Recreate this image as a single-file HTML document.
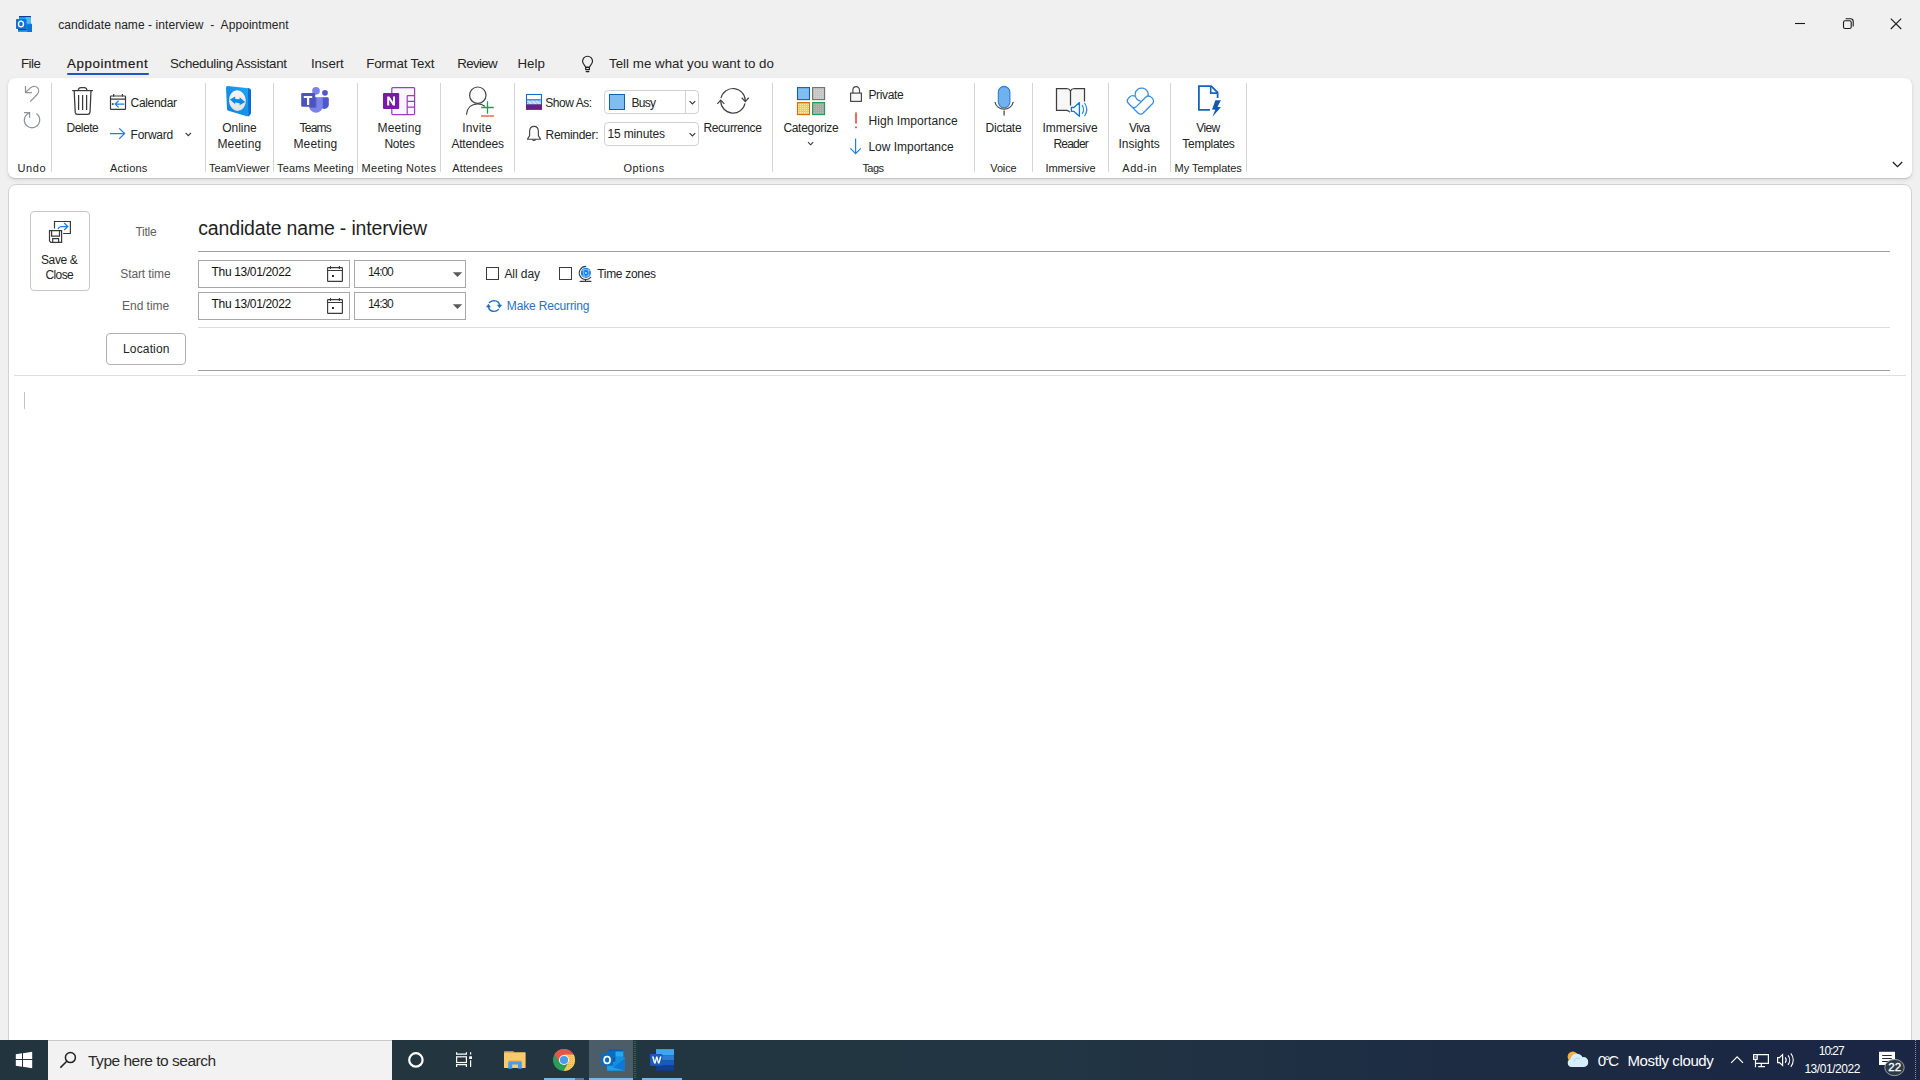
<!DOCTYPE html>
<html lang="en">
<head>
<meta charset="utf-8">
<title>candidate name - interview - Appointment</title>
<style>
html,body{margin:0;padding:0;width:1920px;height:1080px;overflow:hidden;background:#f0f0f0;}
body{font-family:"Liberation Sans",sans-serif;color:#242424;}
#root{position:relative;width:1920px;height:1080px;overflow:hidden;background:#f0f0f0;}
.t{position:absolute;white-space:nowrap;line-height:normal;}
.ic{position:absolute;left:0;top:0;pointer-events:none;}
.abs{position:absolute;box-sizing:border-box;}
.sep{position:absolute;top:83px;height:89px;width:1px;background:#d4d4d4;}
.hl{position:absolute;height:1px;}
</style>
</head>
<body>
<div id="root">
<!-- tab underline -->
<div class="abs" style="left:67px;top:73px;width:82px;height:2px;background:#185abd;border-radius:1px;"></div>
<!-- ribbon -->
<div class="abs" id="ribbon" style="left:8px;top:78px;width:1904px;height:100px;background:#fff;border-radius:7px;box-shadow:0 1px 1px rgba(0,0,0,.12),0 2px 5px rgba(0,0,0,.09),0 0 1px rgba(0,0,0,.10);"></div>
<div class="sep" style="left:51px"></div>
<div class="sep" style="left:205px"></div>
<div class="sep" style="left:273px"></div>
<div class="sep" style="left:357px"></div>
<div class="sep" style="left:440px"></div>
<div class="sep" style="left:514px"></div>
<div class="sep" style="left:772px"></div>
<div class="sep" style="left:974px"></div>
<div class="sep" style="left:1032px"></div>
<div class="sep" style="left:1108px"></div>
<div class="sep" style="left:1170px"></div>
<div class="sep" style="left:1246px"></div>
<!-- ribbon combos -->
<div class="abs" style="left:604px;top:90px;width:95px;height:24px;border:1px solid #d1d1d1;border-radius:4px;background:#fff;"></div>
<div class="abs" style="left:685px;top:91px;width:1px;height:22px;background:#d1d1d1;"></div>
<div class="abs" style="left:609px;top:94px;width:16px;height:16px;border:1px solid #0b63b8;background:#80bdf0;"></div>
<div class="abs" style="left:604px;top:122px;width:95px;height:24px;border:1px solid #d1d1d1;border-radius:4px;background:#fff;"></div>
<!-- content panel -->
<div class="abs" id="content" style="left:8px;top:184px;width:1904px;height:870px;background:#fff;border:1px solid #d2d2d2;border-radius:8px 8px 0 0;"></div>
<!-- save & close -->
<div class="abs" style="left:30px;top:211px;width:60px;height:80px;border:1px solid #c6c6c6;border-radius:4px;background:#fff;"></div>
<!-- title underline -->
<div class="hl" style="left:198px;top:251px;width:1692px;background:#a19f9d;"></div>
<!-- date/time boxes -->
<div class="abs" style="left:198px;top:260px;width:152px;height:28px;border:1px solid #aaa8a6;background:#fff;"></div>
<div class="abs" style="left:354px;top:260px;width:112px;height:28px;border:1px solid #aaa8a6;background:#fff;"></div>
<div class="abs" style="left:198px;top:292px;width:152px;height:28px;border:1px solid #aaa8a6;background:#fff;"></div>
<div class="abs" style="left:354px;top:292px;width:112px;height:28px;border:1px solid #aaa8a6;background:#fff;"></div>
<!-- checkboxes -->
<div class="abs" style="left:486px;top:267px;width:13px;height:13px;border:1px solid #3b3b3b;background:#fff;"></div>
<div class="abs" style="left:559px;top:267px;width:13px;height:13px;border:1px solid #3b3b3b;background:#fff;"></div>
<!-- lines -->
<div class="hl" style="left:198px;top:327px;width:1692px;background:#dcdcdc;"></div>
<div class="abs" style="left:106px;top:333px;width:80px;height:32px;border:1px solid #b3b0ad;border-radius:4px;background:#fff;"></div>
<div class="hl" style="left:198px;top:370px;width:1692px;background:#a19f9d;"></div>
<div class="hl" style="left:14px;top:375px;width:1892px;background:#dedede;"></div>
<!-- caret -->
<div class="abs" style="left:24px;top:392px;width:1px;height:17px;background:#c4c4c4;"></div>
<!-- taskbar -->
<div class="abs" id="taskbar" style="left:0;top:1040px;width:1920px;height:40px;background:linear-gradient(90deg,#22353f 0%,#223641 40%,#213543 55%,#1f3043 66%,#1d2c43 75%,#1c2a42 82%,#1b2844 90%,#1a2644 100%);"></div>
<div class="abs" style="left:48px;top:1040px;width:344px;height:40px;background:#f2f2f2;border-top:1px solid #c9c9c9;"></div>
<div class="abs" style="left:589px;top:1040px;width:44px;height:40px;background:#4b5d68;"></div>
<div class="abs" style="left:544px;top:1078px;width:31px;height:2px;background:#76b9ed;"></div>
<div class="abs" style="left:575px;top:1078px;width:9px;height:2px;background:#4c7ea6;"></div>
<div class="abs" style="left:589px;top:1078px;width:44px;height:2px;background:#76b9ed;"></div>
<div class="abs" style="left:642px;top:1078px;width:40px;height:2px;background:#76b9ed;"></div>


<svg class="ic" width="1920" height="1080" viewBox="0 0 1920 1080">
<!-- ===== title bar ===== -->
<g id="outlook-title">
  <path d="M19 16 H31 V23.4 L32 24 V32 H18 V29 H19 Z" fill="#14a4ee"/>
  <rect x="19" y="16" width="12" height="1.1" fill="#0a3f94"/>
  <rect x="25.5" y="17.1" width="5.5" height="6.4" fill="#4cbcf5"/>
  <path d="M26.6 24.6 L32 24 V32 H27.4 Z" fill="#0f72d6"/>
  <path d="M18 29 H26.6 V30.2 H18 Z" fill="#0a3f94"/>
  <rect x="16" y="18.9" width="10.6" height="10.2" rx=".8" fill="#0f72d6"/>
  <ellipse cx="21" cy="24" rx="2.5" ry="2.9" fill="none" stroke="#fff" stroke-width="1.35"/>
</g>
<g id="winctl" stroke="#1a1a1a" stroke-width="1.1" fill="none">
  <path d="M1795 23.5 H1805"/>
  <rect x="1843.5" y="20.8" width="7.7" height="7.7" rx="1.6"/>
  <path d="M1845.6 18.8 H1850.6 Q1853.2 18.8 1853.2 21.4 V26.4"/>
  <path d="M1890.8 18.6 L1901.2 29 M1901.2 18.6 L1890.8 29"/>
  <path d="M1892.8 162 L1897.5 166.7 L1902.2 162" stroke-width="1.2"/>
</g>
<!-- lightbulb -->
<g id="bulb" stroke="#1f1f1f" stroke-width="1.15" fill="none" stroke-linejoin="round">
  <path d="M585.7 67.3 C585.3 65.3 582.6 64.2 582.6 61.2 A4.95 4.95 0 0 1 592.5 61.2 C592.5 64.2 589.8 65.3 589.4 67.3 Z"/>
  <rect x="585.7" y="67.3" width="3.7" height="2.3"/>
  <path d="M586.2 71.6 H588.9" stroke-linecap="round"/>
</g>
<!-- ===== Undo group ===== -->
<g stroke="#8e9398" stroke-width="1.25" fill="none" stroke-linejoin="miter">
  <path d="M25.5 86 V92.5 H31.9"/>
  <path d="M25.7 92.3 L30.4 87.9 C32.6 85.9 35.6 85.7 37.4 87.6 C39.3 89.6 39 92.6 36.8 94.8 L30.2 101.6"/>
  <path d="M24 112.6 H29.6 V117.8"/>
  <path d="M29.4 112.8 C26.4 114.4 24.3 117 24.3 120.4 A7.7 7.7 0 1 0 36.3 113.6"/>
</g>
<!-- ===== Actions ===== -->
<g id="trash" stroke="#3a3a3a" stroke-width="1.25" fill="none" stroke-linejoin="round">
  <path d="M72.2 90.6 H93"/>
  <path d="M78.3 90.4 C78.3 88.4 79.4 87.5 81 87.5 H84.2 C85.8 87.5 86.9 88.4 86.9 90.4"/>
  <path d="M74.2 90.8 L75.2 112.4 Q75.4 114.4 77.4 114.4 H87.8 Q89.8 114.4 90 112.4 L91 90.8"/>
  <path d="M78.6 95 V110 M82.6 95 V110 M86.6 95 V110"/>
</g>
<g id="cal-arrow">
  <rect x="110.5" y="96" width="15" height="13.4" rx=".6" fill="#fff" stroke="#3a3a3a" stroke-width="1.2"/>
  <path d="M110.5 99.2 H125.5 M113.7 94 V96.6 M122.4 94 V96.6" stroke="#3a3a3a" stroke-width="1.2" fill="none"/>
  <rect x="111.9" y="103.2" width="1.7" height="1.7" fill="#3a3a3a"/>
  <path d="M124.2 104.1 H115.4 M118.6 100.8 L115.2 104.1 L118.6 107.4" stroke="#1e7fe0" stroke-width="1.25" fill="none"/>
</g>
<g stroke="#1e7fe0" stroke-width="1.25" fill="none">
  <path d="M110 133.6 H124.4 M119.2 128.4 L124.6 133.6 L119.2 138.8"/>
</g>
<path d="M185.6 132.9 L188.3 135.6 L191 132.9" stroke="#333" stroke-width="1.1" fill="none"/>
<!-- ===== TeamViewer ===== -->
<g id="tv">
  <path d="M247.4 87.8 L249.6 88.6 Q251 89.2 251 90.8 V112.6 Q251 113.6 250.4 114.4 L248.6 116.4 L246 115 Z" fill="#0a6bd3"/>
  <path d="M226 87.7 Q226 86 227.7 86.1 L246.4 87.9 Q247.8 88.1 247.8 89.6 L248.5 114.9 Q248.5 116.7 246.8 116.2 L228.4 110.8 Q227 110.4 227 109 Z" fill="url(#tvf)"/>
  <ellipse cx="237.4" cy="100.6" rx="8.4" ry="10.3" fill="url(#tvc)" transform="rotate(-4 237.4 100.6)"/>
  <path d="M229.9 99.5 L235.2 96.6 V98.9 L239.6 99.3 V97.2 L245.2 101.9 L239.6 105.2 V103.2 L235.2 102.6 V104.2 Z" fill="#0d8ae8"/>
</g>
<!-- ===== Teams ===== -->
<g id="teams">
  <circle cx="325" cy="92.8" r="2.85" fill="#4f58ca"/>
  <path d="M321 97.2 H327.4 Q328.8 97.2 328.8 98.6 V104 A4.6 4.6 0 0 1 321 107.6 Z" fill="#4f58ca"/>
  <circle cx="316" cy="90.8" r="3.85" fill="#7b83eb"/>
  <path d="M309.2 97.2 H321.6 Q322.8 97.2 322.8 98.4 V106 A6.8 6.8 0 0 1 309.2 106 Z" fill="#7b83eb"/>
  <path d="M309.2 97.2 H316.4 V107.8 H309.5 Q309.2 107 309.2 106 Z" fill="#2f3a8f" opacity=".5"/>
  <rect x="301.2" y="93" width="14" height="13.8" rx="1.3" fill="#4b53bc"/>
  <path d="M303.8 96 H312.2 V97.9 H309.2 V105 H307 V97.9 H303.8 Z" fill="#fff"/>
</g>
<!-- ===== OneNote ===== -->
<g id="onenote">
  <rect x="391.8" y="87.6" width="22.8" height="27" rx="1" fill="#faf7fc" stroke="#9a3cc4" stroke-width="1.25"/>
  <path d="M407.2 95.6 V114.4 M407.2 95.6 H414.6 M407.2 101.4 H414.6 M407.2 107.2 H414.6" stroke="#9a3cc4" stroke-width="1.2" fill="none"/>
  <rect x="383" y="93" width="16.2" height="16" rx="1" fill="#7719aa"/>
  <path d="M387.2 105.4 V96.6 H389.4 L393 102 V96.6 H395 V105.4 H392.9 L389.2 99.8 V105.4 Z" fill="#fff"/>
</g>
<!-- ===== Invite Attendees ===== -->
<g id="invite" fill="none">
  <circle cx="477.8" cy="95.2" r="8.2" stroke="#444" stroke-width="1.2" fill="#fcfcfc"/>
  <path d="M466.4 114.8 C467 108.4 471 104 477.6 104 C480.6 104 483 104.8 484.8 106.2" stroke="#444" stroke-width="1.2"/>
  <path d="M487.5 101.2 V113.8 M481.2 107.5 H493.8" stroke="#1e9d52" stroke-width="1.3"/>
  <path d="M481 116 H494" stroke="#e8412e" stroke-width="1.2"/>
</g>
<!-- ===== Options ===== -->
<defs>
  <pattern id="hatch" width="3" height="3" patternUnits="userSpaceOnUse" patternTransform="rotate(-45)"><rect width="3" height="3" fill="#d6ecfb"/><rect width="1.4" height="3" fill="#8cc4f2"/></pattern>
  <pattern id="dotg" width="2" height="2" patternUnits="userSpaceOnUse"><rect width="2" height="2" fill="#c4c6c4"/><rect width="1" height="1" fill="#d2d4d2"/></pattern>
  <pattern id="doto" width="2" height="2" patternUnits="userSpaceOnUse"><rect width="2" height="2" fill="#fcc55e"/><rect width="1" height="1" fill="#fff3b8"/></pattern>
  <pattern id="dotgg" width="2" height="2" patternUnits="userSpaceOnUse"><rect width="2" height="2" fill="#a4a9a3"/><rect width="1" height="1" fill="#b9bdb8"/></pattern>
  <linearGradient id="tvc" x1="0" y1="0" x2="0" y2="1"><stop offset="0" stop-color="#f6f6f6"/><stop offset="1" stop-color="#e2e2e2"/></linearGradient><linearGradient id="tvf" x1="0" y1="1" x2="1" y2="0"><stop offset="0" stop-color="#0a80e2"/><stop offset="1" stop-color="#1ca6f3"/></linearGradient>
</defs>
<g id="showas">
  <rect x="526.5" y="94.5" width="15" height="10" fill="#fff" stroke="#1b6ac9" stroke-width="1.1"/>
  <rect x="527" y="100" width="14" height="4.6" fill="url(#hatch)"/>
  <path d="M526.5 99.8 H541.5" stroke="#1b6ac9" stroke-width="1.1"/>
  <rect x="526" y="104.4" width="16" height="5.5" fill="#6b1e7e"/>
</g>
<g id="bell" stroke="#444" stroke-width="1.15" fill="none" stroke-linejoin="round">
  <path d="M534 126.4 C531 126.4 529.6 128.8 529.6 131.6 V135.6 L527.4 139.2 H540.6 L538.4 135.6 V131.6 C538.4 128.8 537 126.4 534 126.4 Z" fill="#fafafa"/>
  <path d="M532.4 139.4 A1.7 1.7 0 0 0 535.6 139.4"/>
</g>
<path d="M689.6 101.2 L692.4 104 L695.2 101.2 M689.6 133.2 L692.4 136 L695.2 133.2" stroke="#333" stroke-width="1.1" fill="none"/>
<!-- ===== Categorize ===== -->
<g id="categ">
  <rect x="797.5" y="87.6" width="12" height="12" fill="#80bdf0" stroke="#0b63b8" stroke-width="1.1"/>
  <rect x="812.6" y="87.6" width="12" height="12" fill="url(#dotg)" stroke="#6e6e6e" stroke-width="1.1"/>
  <rect x="797.5" y="102.6" width="12" height="12" fill="url(#doto)" stroke="#c96f0e" stroke-width="1.1"/>
  <rect x="812.6" y="102.6" width="12" height="12" fill="url(#dotgg)" stroke="#1f9a50" stroke-width="1.1"/>
  <path d="M808 142.2 L810.6 144.8 L813.2 142.2" stroke="#333" stroke-width="1.1" fill="none"/>
</g>
<!-- ===== Tags ===== -->
<g id="lock" stroke="#444" stroke-width="1.15" fill="none">
  <rect x="850.6" y="93.1" width="10.8" height="8.3" fill="#f8f8f8"/>
  <path d="M852.9 93 V89.9 A3.3 3.3 0 0 1 859.5 89.9 V93"/>
</g>
<path d="M856 112.4 V123.6" stroke="#e0392e" stroke-width="1.5"/>
<rect x="855.2" y="126.4" width="1.6" height="1.8" fill="#e0392e"/>
<path d="M855.6 138.4 V153.4 M850.4 148.4 L855.6 153.6 L860.8 148.4" stroke="#1e7fe0" stroke-width="1.2" fill="none"/>
<!-- ===== Voice ===== -->
<g id="mic">
  <rect x="998.3" y="86.4" width="11.6" height="21.4" rx="5.8" fill="#6fb2ee" stroke="#2b7cd3" stroke-width="1.1"/>
  <path d="M995 102 A9.2 8.4 0 0 0 1013.2 102 M1004.1 110.4 V115.6" stroke="#444" stroke-width="1.25" fill="none"/>
</g>
<!-- ===== Immersive Reader ===== -->
<g id="immersive" fill="none">
  <path d="M1056.5 88.5 H1066.6 Q1069.4 88.6 1070.5 91 Q1071.6 88.6 1074.4 88.5 H1084.5 V110.3 H1056.5 Z" fill="#f7f7f7"/>
  <path d="M1070.5 105.4 V91 Q1069.4 88.6 1066.6 88.5 H1056.5 V110.3 H1066.8 Q1068.8 110.5 1069.8 112.2 M1070.5 91 Q1071.6 88.6 1074.4 88.5 H1084.5 V101.6" stroke="#3d3d3d" stroke-width="1.25"/>
  <path d="M1071.4 107.5 H1074 L1079.4 102.6 V116.3 L1074 111.4 H1071.4 Z" fill="#fff" stroke="#0f78d4" stroke-width="1.3" stroke-linejoin="round"/>
  <path d="M1082.3 105.6 A7 7 0 0 1 1082.3 113.4 M1084.7 103.3 A11 11 0 0 1 1084.7 115.7" stroke="#2b8ae0" stroke-width="1.15" stroke-linecap="round"/>
</g>
<!-- ===== Viva ===== -->
<g id="viva" fill="none" stroke="#3a8ee0" stroke-width="1.3" stroke-linejoin="round" stroke-linecap="round">
  <path d="M1140.8 101.2 A6.6 6.6 0 1 1 1148.2 95.8"/>
  <path d="M1135 96.3 Q1132 94.7 1129.4 97.2 L1128.3 98.4 Q1126 100.8 1128.3 103.2 L1138 113 Q1140.6 115.3 1143.2 113 L1152.4 103.8 Q1154.7 101 1152.4 98.4 L1151.4 97.4 Q1148.6 94.7 1145.6 97.2 L1136.6 106.4 Q1134.6 108.3 1132.4 107.5"/>
</g>
<!-- ===== View Templates ===== -->
<g id="viewtpl">
  <path d="M1210 109.8 H1198.9 V86.1 H1211.2 L1217.6 92.4 V98" fill="none" stroke="#1565b8" stroke-width="1.8" stroke-linejoin="miter"/>
  <path d="M1210.7 86.4 V93.1 H1217.4" fill="none" stroke="#1565b8" stroke-width="1.6"/>
  <path d="M1215.4 100.2 H1220.9 L1217.5 106.8 L1220.9 107.2 L1212.4 116.8 L1215.3 109.8 L1212 109.6 Z" fill="#1259ad"/>
</g>
<g id="recur" stroke="#444" stroke-width="1.2" fill="none"><path d="M720.97 98.24 A12.30 12.30 0 0 1 745.29 100.37 M741.69 97.77 L745.29 101.57 L748.69 97.77 M745.03 103.36 A12.30 12.30 0 0 1 720.71 101.23 M717.31 103.83 L720.71 100.03 L724.31 103.83"/></g>
<g id="mkrecur" stroke="#1b6ec2" stroke-width="1.4" fill="none" stroke-linecap="round">
  <path d="M489.4 302.6 Q491.4 300.6 494 300.6 Q499.2 300.8 499.7 305.4"/>
  <path d="M488.4 306.6 Q489 311.2 494 311.4 Q496.8 311.4 498.6 309.4"/>
  <path d="M497 304.8 H502.2 L499.6 308.2 Z M486 307.2 L488.4 303.8 L490.9 307.2 Z" fill="#1b6ec2" stroke="none"/>
</g>
<!-- ===== Save & Close ===== -->
<g id="saveclose" fill="none">
  <path d="M54.5 228.6 V221.5 H70.4 V233.5 H63.1" stroke="#3a3a3a" stroke-width="1.2"/>
  <path d="M58.3 228.5 C59.2 227.4 59.6 226.5 61 226.5 H67.6 M64.4 223.3 L67.8 226.5 L64.4 229.7" stroke="#1e7fe0" stroke-width="1.25" stroke-linecap="round" stroke-linejoin="round"/>
  <path d="M49.5 230.6 H61.6 V242.3 H50.8 L49.5 241 Z" fill="#fff" stroke="#3a3a3a" stroke-width="1.2"/>
  <path d="M51.6 230.6 V236.2 H59.5 V230.6 M52.7 242.3 V238.6 H58.6 V242.3" stroke="#3a3a3a" stroke-width="1.2"/>
</g>
<!-- ===== date pickers ===== -->
<g id="datepick" fill="none" stroke="#3a3a3a" stroke-width="1.15">
  <rect x="327.6" y="267.6" width="14.8" height="13.8" rx=".5" fill="#fff"/>
  <path d="M327.6 270.5 H342.4 M330.5 266 V269 M339.4 266 V269"/>
  <rect x="327.6" y="299.6" width="14.8" height="13.8" rx=".5" fill="#fff"/>
  <path d="M327.6 302.5 H342.4 M330.5 298 V301 M339.4 298 V301"/>
</g>
<rect x="332" y="275" width="1.9" height="1.9" fill="#111"/>
<rect x="332" y="307" width="1.9" height="1.9" fill="#111"/>
<path d="M452.8 272.3 H462.2 L457.5 277 Z M452.8 304.3 H462.2 L457.5 309 Z" fill="#5a5a5a"/>
<!-- globe -->
<g id="globe">
  <circle cx="585.9" cy="272.9" r="5.05" fill="#1d7fe0"/>
  <path d="M582 270.5 Q586 268 590 271 M581.5 275.6 Q586 277.8 590.4 274.6 M584 268.3 Q582.4 273 584.6 277.6 M588 268.3 Q589.8 272.6 587.6 277.6" stroke="#9fd3fb" stroke-width=".7" fill="none"/>
  <circle cx="585.9" cy="272.9" r="1" fill="#bfe6ff"/>
  <path d="M585.7 266.4 A6.55 6.55 0 1 0 590.7 277.3" fill="none" stroke="#3a3a3a" stroke-width="1.1" stroke-linecap="round"/>
  <path d="M585.5 279.4 V281.4 M580.1 281.4 H590.9" stroke="#3a3a3a" stroke-width="1.1" stroke-linecap="round"/>
</g>
<!-- ===== taskbar ===== -->
<defs>
  <pattern id="chy" width="2" height="2" patternUnits="userSpaceOnUse"><rect width="2" height="2" fill="#fcc860"/><rect width="1" height="1" fill="#f0b044"/></pattern>
  <clipPath id="chclip"><circle cx="564" cy="1060" r="11.1"/></clipPath>
</defs>
<g id="winlogo" fill="#fff">
  <path d="M15.8 1054.2 L22 1053.3 V1059 H15.8 Z M23 1053.15 L32.2 1051.8 V1059 H23 Z M15.8 1060 H22 V1066.7 L15.8 1065.8 Z M23 1060 H32.2 V1068.2 L23 1066.85 Z"/>
</g>
<g id="search" stroke="#222" stroke-width="1.5" fill="none">
  <circle cx="70.4" cy="1057.6" r="5"/>
  <path d="M66.8 1061.2 L60.4 1067.6"/>
</g>
<circle cx="415.9" cy="1059.9" r="6.7" fill="none" stroke="#fff" stroke-width="2.2"/>
<g id="taskview" stroke="#fff" stroke-width="1.2" fill="none">
  <path d="M456.6 1052.2 V1054.2 H466.4 V1052.2"/>
  <rect x="456.6" y="1056.8" width="9.8" height="5.7"/>
  <path d="M456.6 1067 V1064.7 H466.4 V1067"/>
  <path d="M470.6 1052.2 V1054.6 M470.6 1060.2 V1067"/>
  <rect x="469.2" y="1056.3" width="2.8" height="2.7" fill="#fff" stroke="none"/>
</g>
<g id="folder">
  <path d="M504 1051.8 Q504 1051 504.8 1051 H512.6 Q513.4 1051 513.8 1051.6 L514.4 1052.6 H504 Z" fill="#d28b1c"/>
  <rect x="504" y="1052.2" width="21.6" height="15.8" rx=".6" fill="#fdc96b"/>
  <path d="M508.2 1068.7 V1062.4 Q508.2 1061.2 509.4 1061.2 H520.6 Q521.8 1061.2 521.8 1062.4 V1068.7 H518 V1064.5 H512.2 V1068.7 Z" fill="#4a9be8"/>
  <rect x="509" y="1060.4" width="12" height="1" fill="#e6a93e"/>
</g>
<g id="chrome" clip-path="url(#chclip)">
  <circle cx="564" cy="1060" r="11.2" fill="#2a9d58"/>
  <path d="M564 1060 L554.39 1054.45 A11.1 11.1 0 0 1 573.61 1054.45 Z" fill="#e2574c"/>
  <path d="M552 1047 H576 V1054.6 H564 L559.6 1062.4 L553.4 1052.6 Z" fill="#e2574c"/>
  <path d="M576 1054.6 H564 L568.4 1062.6 L563 1072 H577 Z" fill="url(#chy)"/>
  <circle cx="564" cy="1060" r="5.1" fill="#f4f4f4"/>
  <circle cx="564" cy="1060" r="4.1" fill="#4a9be8"/>
</g>
<g id="outlook-tb">
  <path d="M608 1049.2 H623.2 V1057.2 H624.8 V1070.6 H607.2 V1066 H608 Z" fill="#1490df"/>
  <rect x="608" y="1049.2" width="15.2" height="2.4" fill="#0a5cb0"/>
  <rect x="608" y="1051.6" width="7.6" height="5" fill="#0f6cbd"/>
  <rect x="615.6" y="1051.6" width="7.6" height="5" fill="#28a8ea"/>
  <rect x="608" y="1056.6" width="7.6" height="5" fill="#0a5cb0"/>
  <rect x="615.6" y="1056.6" width="7.6" height="5" fill="#1490df"/>
  <path d="M607.2 1064 L624.8 1070.6 H607.2 Z" fill="#1aa0ec"/>
  <path d="M624.8 1058.5 L613 1067.6 L624.8 1070.6 Z" fill="#0f78d4"/>
  <rect x="601.1" y="1054" width="12" height="11.8" rx=".8" fill="#0f6cbd"/>
  <ellipse cx="607.1" cy="1059.9" rx="3" ry="3.4" fill="none" stroke="#fff" stroke-width="1.7"/>
</g>
<g id="word-tb">
  <rect x="656" y="1049.1" width="18" height="6.4" fill="#41a5ee"/>
  <rect x="656" y="1055.5" width="18" height="5" fill="#2b7cd3"/>
  <rect x="656" y="1060.5" width="18" height="5" fill="#185abd"/>
  <rect x="656" y="1065.5" width="18" height="5.2" fill="#103f91"/>
  <rect x="650" y="1054" width="12.3" height="11.8" rx=".8" fill="#185abd"/>
  <path d="M652 1056.6 H653.7 L654.9 1061.6 L656.1 1056.6 H657.5 L658.7 1061.6 L659.9 1056.6 H661.5 L659.5 1063.4 H657.9 L656.8 1058.9 L655.7 1063.4 H654 Z" fill="#fff"/>
</g>
<path d="M635 1041 V1078" stroke="#5a4d48" stroke-width="2.4" stroke-dasharray="1 1"/>
<g id="weather">
  <circle cx="1572.8" cy="1056.8" r="5.2" fill="#f5b043"/>
  <path d="M1571.6 1067 A4.1 4.1 0 0 1 1570.6 1059 A6.4 6.4 0 0 1 1582.6 1057.2 A4.6 4.6 0 0 1 1588.2 1062.2 A4.4 4.4 0 0 1 1584 1067 Z" fill="#d7effd"/>
  <path d="M1574 1062 A4 4 0 0 1 1580 1058.6" stroke="#a9d6f7" stroke-width="1" fill="none"/>
</g>
<g id="tray" stroke="#fff" stroke-width="1.2" fill="none">
  <path d="M1731.2 1062.8 L1737.1 1056.8 L1743 1062.8"/>
  <path d="M1753.2 1054.6 H1768.4 V1063.4 H1755.6 M1761.3 1063.4 V1066.6 M1758.2 1066.7 H1765"/>
  <path d="M1753.6 1054.6 V1059.4 H1757.2 V1054.6 M1755.5 1059.4 V1067.2 M1754.6 1057 H1756.4"/>
  <path d="M1777.6 1057.6 H1779.4 L1782.6 1054.6 V1065.5 L1779.4 1062.6 H1777.6 Z"/>
  <path d="M1785.2 1057.4 A4.4 4.4 0 0 1 1785.2 1062.8 M1788 1055.4 A7.4 7.4 0 0 1 1788 1064.8 M1790.8 1053.4 A10.4 10.4 0 0 1 1790.8 1066.8" stroke-width="1.1"/>
</g>
<g id="notif">
  <rect x="1879" y="1051.8" width="16" height="13.2" fill="#fff"/>
  <path d="M1882.2 1055.5 H1891.8 M1882.2 1058.5 H1891.8 M1882.2 1061.5 H1891.8" stroke="#1b2744" stroke-width="1.1"/>
  <ellipse cx="1894.5" cy="1067.5" rx="9.7" ry="8.1" fill="#2b3a47" stroke="#a0a0a0" stroke-width="1"/>
</g>
<path d="M1915.5 1040 V1080" stroke="#8c8f96" stroke-width="1" stroke-dasharray="1 1"/>

</svg>
<span class="t" style="left:58.30px;top:18.00px;font-size:12px;letter-spacing:0.071px;color:#242424;">candidate name - interview&nbsp; -&nbsp; Appointment</span>
<span class="t" style="left:21.00px;top:56.00px;font-size:13.3px;letter-spacing:-0.510px;color:#242424;">File</span>
<span class="t" style="left:67.00px;top:56.00px;font-size:13.3px;letter-spacing:0.604px;color:#1a1a1a;-webkit-text-stroke:0.2px #1a1a1a;">Appointment</span>
<span class="t" style="left:170.00px;top:56.00px;font-size:13.3px;letter-spacing:-0.302px;color:#242424;">Scheduling Assistant</span>
<span class="t" style="left:311.00px;top:56.00px;font-size:13.3px;letter-spacing:-0.112px;color:#242424;">Insert</span>
<span class="t" style="left:366.20px;top:56.00px;font-size:13.3px;letter-spacing:-0.170px;color:#242424;">Format Text</span>
<span class="t" style="left:457.20px;top:56.00px;font-size:13.3px;letter-spacing:-0.639px;color:#242424;">Review</span>
<span class="t" style="left:517.40px;top:56.00px;font-size:13.3px;letter-spacing:0.083px;color:#242424;">Help</span>
<span class="t" style="left:609.00px;top:56.00px;font-size:13.3px;letter-spacing:0.031px;color:#242424;">Tell me what you want to do</span>
<span class="t" style="left:66.50px;top:121.00px;font-size:12px;letter-spacing:-0.503px;color:#242424;">Delete</span>
<span class="t" style="left:222.30px;top:121.00px;font-size:12px;letter-spacing:-0.063px;color:#242424;">Online</span>
<span class="t" style="left:217.40px;top:137.00px;font-size:12px;letter-spacing:0.180px;color:#242424;">Meeting</span>
<span class="t" style="left:299.50px;top:121.00px;font-size:12px;letter-spacing:-0.761px;color:#242424;">Teams</span>
<span class="t" style="left:293.40px;top:137.00px;font-size:12px;letter-spacing:0.197px;color:#242424;">Meeting</span>
<span class="t" style="left:377.50px;top:121.00px;font-size:12px;letter-spacing:0.164px;color:#242424;">Meeting</span>
<span class="t" style="left:384.40px;top:137.00px;font-size:12px;letter-spacing:-0.187px;color:#242424;">Notes</span>
<span class="t" style="left:462.20px;top:121.00px;font-size:12px;letter-spacing:0.158px;color:#242424;">Invite</span>
<span class="t" style="left:451.40px;top:137.00px;font-size:12px;letter-spacing:-0.180px;color:#242424;">Attendees</span>
<span class="t" style="left:703.50px;top:121.00px;font-size:12px;letter-spacing:-0.406px;color:#242424;">Recurrence</span>
<span class="t" style="left:783.40px;top:121.00px;font-size:12px;letter-spacing:-0.306px;color:#242424;">Categorize</span>
<span class="t" style="left:985.50px;top:121.00px;font-size:12px;letter-spacing:-0.196px;color:#242424;">Dictate</span>
<span class="t" style="left:1042.50px;top:121.00px;font-size:12px;letter-spacing:-0.020px;color:#242424;">Immersive</span>
<span class="t" style="left:1053.50px;top:137.00px;font-size:12px;letter-spacing:-0.812px;color:#242424;">Reader</span>
<span class="t" style="left:1129.00px;top:121.00px;font-size:12px;letter-spacing:-0.618px;color:#242424;">Viva</span>
<span class="t" style="left:1118.40px;top:137.00px;font-size:12px;letter-spacing:0.006px;color:#242424;">Insights</span>
<span class="t" style="left:1196.30px;top:121.00px;font-size:12px;letter-spacing:-0.609px;color:#242424;">View</span>
<span class="t" style="left:1182.30px;top:137.00px;font-size:12px;letter-spacing:-0.274px;color:#242424;">Templates</span>
<span class="t" style="left:130.60px;top:96.00px;font-size:12px;letter-spacing:-0.329px;color:#242424;">Calendar</span>
<span class="t" style="left:130.60px;top:127.80px;font-size:12px;letter-spacing:-0.239px;color:#242424;">Forward</span>
<span class="t" style="left:545.30px;top:95.70px;font-size:12px;letter-spacing:-0.451px;color:#242424;">Show As:</span>
<span class="t" style="left:631.50px;top:95.70px;font-size:12px;letter-spacing:-0.726px;color:#242424;">Busy</span>
<span class="t" style="left:545.50px;top:127.80px;font-size:12px;letter-spacing:-0.290px;color:#242424;">Reminder:</span>
<span class="t" style="left:607.40px;top:126.90px;font-size:12px;letter-spacing:-0.122px;color:#242424;">15 minutes</span>
<span class="t" style="left:868.40px;top:87.70px;font-size:12px;letter-spacing:-0.346px;color:#242424;">Private</span>
<span class="t" style="left:868.40px;top:114.00px;font-size:12px;letter-spacing:0.088px;color:#242424;">High Importance</span>
<span class="t" style="left:868.40px;top:140.00px;font-size:12px;letter-spacing:-0.008px;color:#242424;">Low Importance</span>
<span class="t" style="left:17.40px;top:161.70px;font-size:11px;letter-spacing:0.674px;color:#242424;">Undo</span>
<span class="t" style="left:110.00px;top:161.70px;font-size:11px;letter-spacing:0.205px;color:#242424;">Actions</span>
<span class="t" style="left:209.00px;top:161.70px;font-size:11px;letter-spacing:0.038px;color:#242424;">TeamViewer</span>
<span class="t" style="left:277.00px;top:161.70px;font-size:11px;letter-spacing:0.169px;color:#242424;">Teams Meeting</span>
<span class="t" style="left:361.50px;top:161.70px;font-size:11px;letter-spacing:0.298px;color:#242424;">Meeting Notes</span>
<span class="t" style="left:452.30px;top:161.70px;font-size:11px;letter-spacing:0.120px;color:#242424;">Attendees</span>
<span class="t" style="left:623.40px;top:161.70px;font-size:11px;letter-spacing:0.482px;color:#242424;">Options</span>
<span class="t" style="left:862.40px;top:161.70px;font-size:11px;letter-spacing:-0.545px;color:#242424;">Tags</span>
<span class="t" style="left:990.30px;top:161.70px;font-size:11px;letter-spacing:-0.148px;color:#242424;">Voice</span>
<span class="t" style="left:1045.50px;top:161.70px;font-size:11px;letter-spacing:-0.088px;color:#242424;">Immersive</span>
<span class="t" style="left:1122.30px;top:161.70px;font-size:11px;letter-spacing:0.504px;color:#242424;">Add-in</span>
<span class="t" style="left:1174.60px;top:161.70px;font-size:11px;letter-spacing:-0.041px;color:#242424;">My Templates</span>
<span class="t" style="left:41.00px;top:252.50px;font-size:12px;letter-spacing:-0.387px;color:#242424;">Save &amp;</span>
<span class="t" style="left:45.60px;top:267.50px;font-size:12px;letter-spacing:-0.651px;color:#242424;">Close</span>
<span class="t" style="left:135.40px;top:224.60px;font-size:12px;letter-spacing:-0.263px;color:#605e5c;">Title</span>
<span class="t" style="left:120.25px;top:266.50px;font-size:12px;letter-spacing:-0.102px;color:#605e5c;">Start time</span>
<span class="t" style="left:122.00px;top:298.50px;font-size:12px;letter-spacing:-0.026px;color:#605e5c;">End time</span>
<span class="t" style="left:198.30px;top:217.00px;font-size:19.5px;letter-spacing:-0.174px;color:#1f1f1f;">candidate name - interview</span>
<span class="t" style="left:211.60px;top:264.50px;font-size:12px;letter-spacing:-0.346px;color:#111;">Thu 13/01/2022</span>
<span class="t" style="left:211.60px;top:296.50px;font-size:12px;letter-spacing:-0.346px;color:#111;">Thu 13/01/2022</span>
<span class="t" style="left:368.00px;top:264.50px;font-size:12px;letter-spacing:-1.089px;color:#1f1f1f;">14:00</span>
<span class="t" style="left:368.00px;top:296.50px;font-size:12px;letter-spacing:-1.089px;color:#1f1f1f;">14:30</span>
<span class="t" style="left:504.40px;top:266.75px;font-size:12px;letter-spacing:-0.070px;color:#242424;">All day</span>
<span class="t" style="left:597.25px;top:266.75px;font-size:12px;letter-spacing:-0.314px;color:#242424;">Time zones</span>
<span class="t" style="left:506.80px;top:299.00px;font-size:12px;letter-spacing:-0.159px;color:#2a6fc9;">Make Recurring</span>
<span class="t" style="left:123.00px;top:342.10px;font-size:12px;letter-spacing:0.151px;color:#242424;">Location</span>
<span class="t" style="left:88.00px;top:1052.00px;font-size:15.5px;letter-spacing:-0.493px;color:#2b2b2b;">Type here to search</span>
<span class="t" style="left:1597.80px;top:1052.20px;font-size:15px;letter-spacing:-1.970px;color:#fff;">0°C</span>
<span class="t" style="left:1627.50px;top:1052.20px;font-size:15px;letter-spacing:-0.380px;color:#fff;">Mostly cloudy</span>
<span class="t" style="left:1818.80px;top:1043.75px;font-size:12px;letter-spacing:-1.039px;color:#fff;">10:27</span>
<span class="t" style="left:1804.40px;top:1061.60px;font-size:12px;letter-spacing:-0.443px;color:#fff;">13/01/2022</span>
<span class="t" style="left:1888.20px;top:1060.70px;font-size:11.5px;letter-spacing:0.104px;color:#fff;-webkit-text-stroke:0.3px #fff;">22</span>
</div>
</body>
</html>
